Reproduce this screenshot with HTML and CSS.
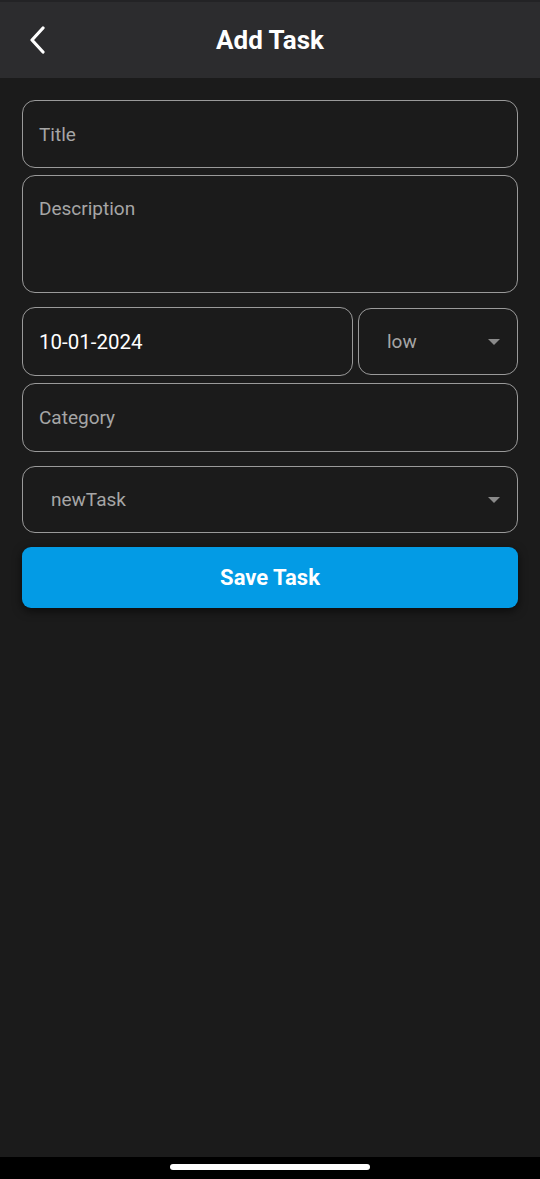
FILE: index.html
```html
<!DOCTYPE html>
<html>
<head>
<meta charset="utf-8">
<link rel="stylesheet" href="styles.css">
</head>
<body>
<div class="screen">
  <header class="appbar">
    <div class="back">
      <svg width="20" height="28" viewBox="0 0 20 28"><path d="M15 2 L4 14 L15 26" fill="none" stroke="#fff" stroke-width="3.2" stroke-linecap="round" stroke-linejoin="round"/></svg>
    </div>
    <h1 class="title">Add Task</h1>
  </header>
  <main class="form">
    <div class="field field-title"><span class="ph">Title</span></div>
    <div class="field field-desc"><span class="ph">Description</span></div>
    <div class="row">
      <div class="field field-date"><span class="val">10-01-2024</span></div>
      <div class="field field-select small"><span class="ph">low</span><span class="caret"></span></div>
    </div>
    <div class="field field-cat"><span class="ph">Category</span></div>
    <div class="field field-select wide"><span class="ph">newTask</span><span class="caret"></span></div>
    <button class="save">Save Task</button>
  </main>
  <div class="navbar"><div class="pill"></div></div>
</div>
</body>
</html>
```
FILE: styles.css
```css
* { box-sizing: border-box; margin: 0; padding: 0; }
html, body { width: 540px; height: 1179px; background: #1b1b1b; }
body { font-family: Roboto, "Noto Sans", sans-serif; overflow: hidden; }
.screen { display: flex; flex-direction: column; height: 1179px; }
.appbar {
  height: 78px; background: #2c2c2e; border-top: 2px solid #232325;
  display: flex; align-items: center; justify-content: center; position: relative;
}
.back { position: absolute; left: 28px; top: 24px; width: 20px; height: 28px; }
.title { color: #fff; font-size: 26px; font-weight: 700; margin-top: -1px; }
.form { flex: 1; padding: 22px 22px 0 22px; display: flex; flex-direction: column; }
.field {
  border: 1.5px solid #9a9a9a; border-radius: 13px; background: #1b1b1b;
  padding: 0 16px; display: flex; align-items: center; font-size: 19px;
}
.ph { color: #a6a6a6; }
.val { color: #fff; font-size: 20.5px; }
.field-title { height: 68px; }
.field-desc { height: 118px; margin-top: 7px; align-items: flex-start; padding-top: 21px; }
.row { display: flex; gap: 5px; margin-top: 14px; }
.field-date { flex: 1; height: 69px; }
.small { width: 160px; height: 67px; margin-top: 1px; padding-left: 28px; padding-right: 17px; justify-content: space-between; }
.field-cat { height: 69px; margin-top: 7px; }
.wide { height: 67px; margin-top: 14px; padding-left: 28px; padding-right: 17px; justify-content: space-between; }
.caret { width: 0; height: 0; border-left: 6px solid transparent; border-right: 6px solid transparent; border-top: 6px solid #8a8a8a; }
.save {
  margin-top: 14px; height: 61px; border: none; border-radius: 9px; background: #039be5;
  color: #fff; font-family: Roboto, sans-serif; font-size: 22px; font-weight: 700;
  box-shadow: 0 3px 10px rgba(0,0,0,0.6);
}
.navbar { height: 22px; background: #000; display: flex; justify-content: center; padding-top: 7px; }
.pill { width: 200px; height: 6px; background: #fff; border-radius: 3px; }
```
